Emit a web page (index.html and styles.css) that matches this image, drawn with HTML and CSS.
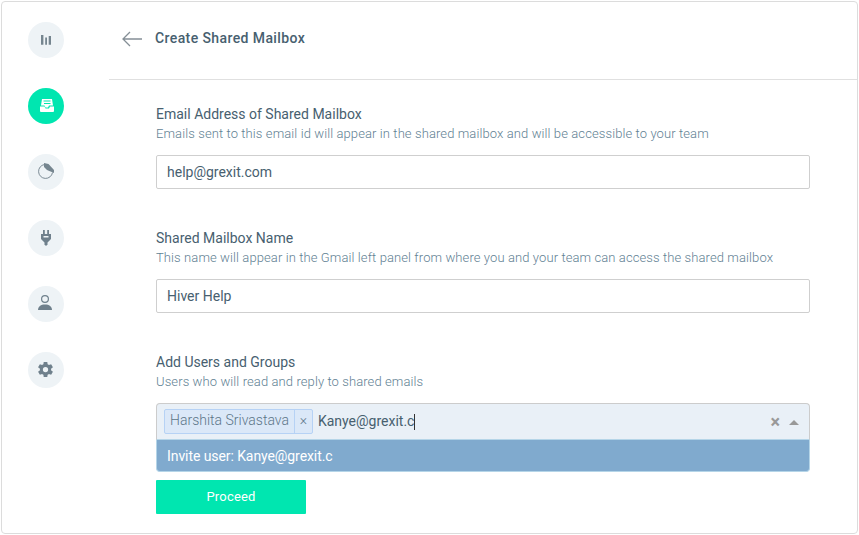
FILE: index.html
```html
<!DOCTYPE html>
<html lang="en">
<head>
    <meta charset="UTF-8">
    <title>Create Shared Mailbox</title>
    <link rel="stylesheet" href="styles.css">
</head>
<body>
    <div class="frame">
        <div class="sidebar">
            <!-- icons are drawn on the 36x36 circle -->
            <div class="nav-item">
                <svg width="36" height="36" viewBox="0 0 36 36"><path fill="#75858f" d="M13 13h2.400v9.700H13zM17.200 15.500h1.800v7.200h-1.800zM20.700 14H23v8.700h-2.300z"/></svg>
            </div>
            <div class="nav-item active">
                <svg width="36" height="36" viewBox="0 0 36 36"><path fill="#fff" d="M14 11h10l1 6.500h-4l-1 2h-2.500l-1-2h-3.500zM12 18.500h4.500l1 2h3.500l1-2H26V23a1 1 0 0 1-1 1H13a1 1 0 0 1-1-1z"/><path stroke="#00e6b0" d="M15.500 13h7M16 15.500h6.500"/></svg>
            </div>
            <div class="nav-item">
                <svg width="36" height="36" viewBox="0 0 36 36"><path fill="none" stroke="#7d8c96" stroke-width="1" d="M16.500 10.500a7 7 0 1 0 8 8"/><path fill="#75858f" d="M16 9l4.500 1 5.500 6v3l-7-3-3-3z"/></svg>
            </div>
            <div class="nav-item">
                <svg width="36" height="36" viewBox="0 0 36 36"><path fill="#6f808c" d="M15 10h1.800v4h2.400v-4H21v4h2v5l-3.500 3.500V25h-1v1h-1v-1h-1v-2.500L13 19v-5h2z"/><path fill="#eef3f6" d="M15.500 16h5v1.500h-5z"/></svg>
            </div>
            <div class="nav-item">
                <svg width="36" height="36" viewBox="0 0 36 36"><circle cx="17" cy="13" r="3.400" fill="none" stroke="#6f808c" stroke-width="1.200"/><path fill="#6f808c" d="M10 24c0-3.500 2.800-5.500 7-5.500s7 2 7 5.500z"/></svg>
            </div>
            <div class="nav-item">
                <svg width="36" height="36" viewBox="0 0 36 36"><path transform="translate(8.500 8.500) scale(.75)" fill="#6f808c" d="M19.400 13a7.500 7.500 0 0 0 0-2l2.500-1.900-2.400-4.200-3 1.200a7.500 7.500 0 0 0-1.700-1L14.400 1.900H9.600L9.200 5.100a7.500 7.500 0 0 0-1.700 1l-3-1.200-2.400 4.200L4.600 11a7.500 7.500 0 0 0 0 2l-2.500 1.900 2.400 4.200 3-1.200a7.500 7.500 0 0 0 1.700 1l.4 3.200h4.800l.4-3.200a7.500 7.500 0 0 0 1.700-1l3 1.200 2.400-4.200zM12 15.500a3.500 3.500 0 1 1 0-7 3.500 3.500 0 0 1 0 7z"/></svg>
            </div>
        </div>
        <div class="main">
            <div class="header">
                <svg class="back" width="22" height="16" viewBox="0 0 22 16"><path fill="none" stroke="#858f96" stroke-width="1.300" d="M21 8H2M9 1 2 8l7 7"/></svg>
                <span class="title">Create Shared Mailbox</span>
            </div>
            <div class="form">
                <div class="field">
                    <div class="label">Email Address of Shared Mailbox</div>
                    <div class="hint">Emails sent to this email id will appear in the shared mailbox and will be accessible to your team</div>
                    <div class="input">help@grexit.com</div>
                </div>
                <div class="field">
                    <div class="label">Shared Mailbox Name</div>
                    <div class="hint">This name will appear in the Gmail left panel from where you and your team can access the shared mailbox</div>
                    <div class="input">Hiver Help</div>
                </div>
                <div class="field last">
                    <div class="label">Add Users and Groups</div>
                    <div class="hint">Users who will read and reply to shared emails</div>
                    <div class="select">
                        <div class="tag">
                            <span class="tag-name">Harshita Srivastava</span>
                            <span class="tag-x">×</span>
                        </div>
                        <span class="typed">Kanye@grexit.c</span>
                        <span class="caret"></span>
                        <span class="clear">×</span>
                        <span class="arrow"></span>
                    </div>
                    <div class="menu">Invite user: Kanye@grexit.c</div>
                </div>
                <button class="proceed">Proceed</button>
            </div>
        </div>
    </div>
</body>
</html>
```

FILE: styles.css
```css
* {
    box-sizing: border-box;
}

body {
    margin: 0;
    background: #fff;
    font-family: Roboto, "Liberation Sans", sans-serif;
    color: #47606f;
}

.frame {
    display: flex;
    width: 857px;
    height: 533px;
    margin: 1px 0 0 1px;
    border: 1px solid #dcdcdc;
    border-radius: 4px;
    overflow: hidden;
}

.sidebar {
    width: 107px;
    padding: 20px 0 0 26px;
    display: flex;
    flex-direction: column;
    gap: 30px;
}

.nav-item {
    width: 36px;
    height: 36px;
    border-radius: 50%;
    background: #eef3f6;
}

.nav-item svg {
    display: block;
}

.nav-item.active {
    background: #00e6b0;
}

.main {
    flex: 1;
}

.header {
    height: 78px;
    border-bottom: 1px solid #e0e0e0;
    display: flex;
    align-items: center;
    padding-left: 12px;
    padding-bottom: 6px;
}

.back {
    margin-top: 2px;
    margin-right: 12px;
}

.title {
    font-size: 14px;
    font-weight: 500;
    letter-spacing: 0.4px;
}

.form {
    padding: 25px 47px 0 47px;
}

.field {
    margin-bottom: 40px;
}

.field.last {
    margin-bottom: 8px;
}

.label {
    font-size: 14px;
    line-height: 18px;
}

.hint {
    font-size: 13px;
    line-height: 18px;
    font-weight: 300;
    letter-spacing: 0.1px;
    color: #5f7f93;
    margin-top: 2px;
    margin-bottom: 12px;
}

.input {
    height: 34px;
    border: 1px solid #cfcfcf;
    border-radius: 2px;
    padding: 0 10px;
    font-size: 14px;
    line-height: 32px;
}

.select {
    height: 37px;
    background: #e9f0f7;
    border: 1px solid #cccccc;
    border-bottom-color: #b5d5e8;
    border-radius: 4px 4px 0 0;
    display: flex;
    align-items: center;
    padding: 0 10px 0 7px;
}

.tag {
    display: flex;
    height: 25px;
    margin-bottom: 1px;
    background: #dbe8f8;
    border: 1px solid #b6d2f5;
    border-radius: 2px;
    font-size: 14px;
    font-weight: 300;
    line-height: 20px;
    color: #5b7688;
}

.tag-name {
    padding: 0 5px;
    border-right: 1px solid #b6d2f5;
}

.tag-x {
    width: 17px;
    text-align: center;
    line-height: 21px;
}

.typed {
    margin-left: 5px;
    margin-bottom: 1px;
    font-size: 14px;
}

.caret {
    width: 1px;
    height: 16px;
    background: #333;
}

.clear {
    margin-left: auto;
    font-size: 18px;
    font-weight: 700;
    color: #999;
    line-height: 18px;
}

.arrow {
    margin-left: 9px;
    margin-top: 2px;
    border-style: solid;
    border-width: 0 5px 5px;
    border-color: transparent transparent #999;
}

.menu {
    height: 32px;
    background: #80aace;
    border-radius: 0 0 4px 4px;
    border: 1px solid #b5d5e8;
    border-top: none;
    padding-left: 10px;
    font-size: 14px;
    line-height: 32px;
    letter-spacing: -0.08px;
    color: #fff;
}

.proceed {
    display: block;
    width: 150px;
    height: 34px;
    border: none;
    border-radius: 1px;
    padding: 0 0 2px;
    background: #00e6b0;
    color: #fff;
    font-family: inherit;
    font-size: 13px;
    letter-spacing: 0.2px;
}
```
